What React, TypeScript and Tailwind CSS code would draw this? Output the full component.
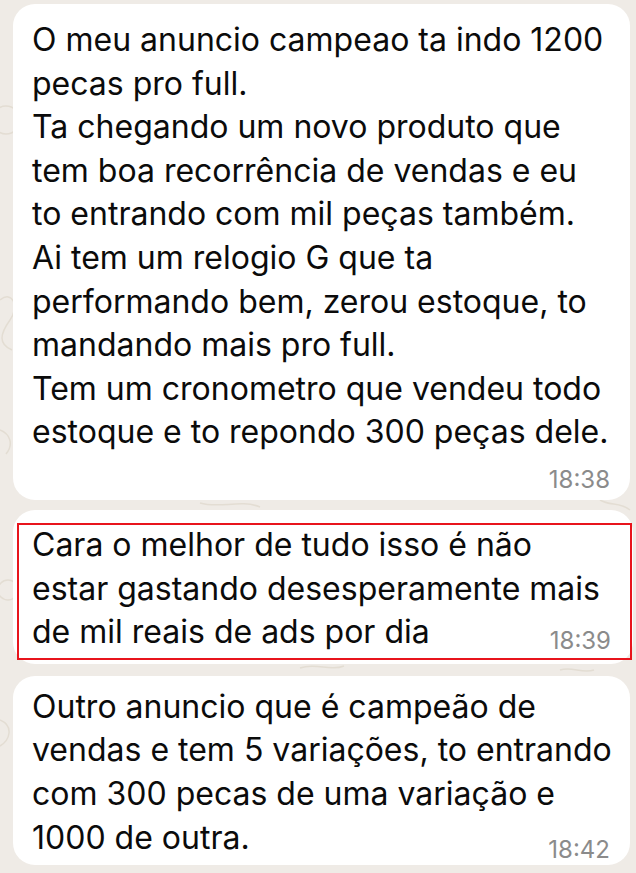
import React from "react";

const first = [
  "O meu anuncio campeao ta indo 1200",
  "pecas pro full.",
  "Ta chegando um novo produto que",
  "tem boa recorrência de vendas e eu",
  "to entrando com mil peças também.",
  "Ai tem um relogio G que ta",
  "performando bem, zerou estoque, to",
  "mandando mais pro full.",
  "Tem um cronometro que vendeu todo",
  "estoque e to repondo 300 peças dele.",
];

const second = [
  "Cara o melhor de tudo isso é não",
  "estar gastando desesperamente mais",
  "de mil reais de ads por dia",
];

const third = [
  "Outro anuncio que é campeão de",
  "vendas e tem 5 variações, to entrando",
  "com 300 pecas de uma variação e",
  "1000 de outra.",
];

function Doodles() {
  // fundo do whatsapp, bem clarinho
  return (
    <svg className="absolute inset-0 h-full w-full" viewBox="0 0 636 873" fill="none">
      <g stroke="#e3ddd3" strokeWidth="1.5">
        <circle cx="6" cy="120" r="14" />
        <path d="M0 300c12-10 20 6 10 20s-12 24 2 30" />
        <path d="M0 430c10 4 14 14 6 24" />
        <circle cx="8" cy="590" r="10" />
        <path d="M0 720c14 6 10 20 0 26" />
        <path d="M200 503c20 6 40-4 60 4" />
        <path d="M300 668c16-6 30 4 44-2" />
        <path d="M600 500c10 6 20 2 30 10" />
        <path d="M560 670c12-4 22 4 34 0" />
      </g>
    </svg>
  );
}

function Lines({ lines }: { lines: string[] }) {
  return (
    <>
      {lines.map((l, i) => (
        <div key={i} className="whitespace-nowrap">
          {l}
        </div>
      ))}
    </>
  );
}

function LastLine({ text, time, drop }: { text: string; time: string; drop: string }) {
  return (
    <div className="flex items-end justify-between whitespace-nowrap">
      <span>{text}</span>
      <span className={`text-[24px] text-[#8b8b8b] ${drop}`}>{time}</span>
    </div>
  );
}

export default function App() {
  return (
    <div
      className="relative h-[873px] w-[636px] overflow-hidden bg-[#efebe6] text-[32px] leading-[43.6px] text-[#0b0b0b]"
      style={{ fontFamily: "Inter, 'Liberation Sans', sans-serif" }}
    >
      <Doodles />
      <div className="relative flex flex-col">
        {/* mensagem 1 */}
        <div className="ml-[13px] mr-[6px] mt-[4px] rounded-[22px] bg-white pb-[5px] pl-[19px] pr-[20px] pt-[14px]">
          <Lines lines={first} />
          <div className="mt-[11px] text-right text-[24px] leading-[30px] text-[#8b8b8b]">18:38</div>
        </div>

        {/* mensagem 2, com o quadro vermelho por cima */}
        <div className="relative ml-[13px] mr-[3px] mt-[10px] rounded-[22px] bg-white pb-[10px] pl-[19px] pr-[22px] pt-[13px]">
          <Lines lines={second.slice(0, 2)} />
          <LastLine text={second[2]} time="18:39" drop="translate-y-[9px]" />
          <div className="absolute bottom-[4px] left-[4px] right-[1px] top-[13px] border-2 border-[#e8141c]" />
        </div>

        {/* mensagem 3 */}
        <div className="ml-[13px] mr-[6px] mt-[12px] rounded-[22px] bg-white pb-[6px] pl-[19px] pr-[20px] pt-[9px]">
          <Lines lines={third.slice(0, 3)} />
          <LastLine text={third[3]} time="18:42" drop="translate-y-[12px]" />
        </div>
      </div>
    </div>
  );
}
